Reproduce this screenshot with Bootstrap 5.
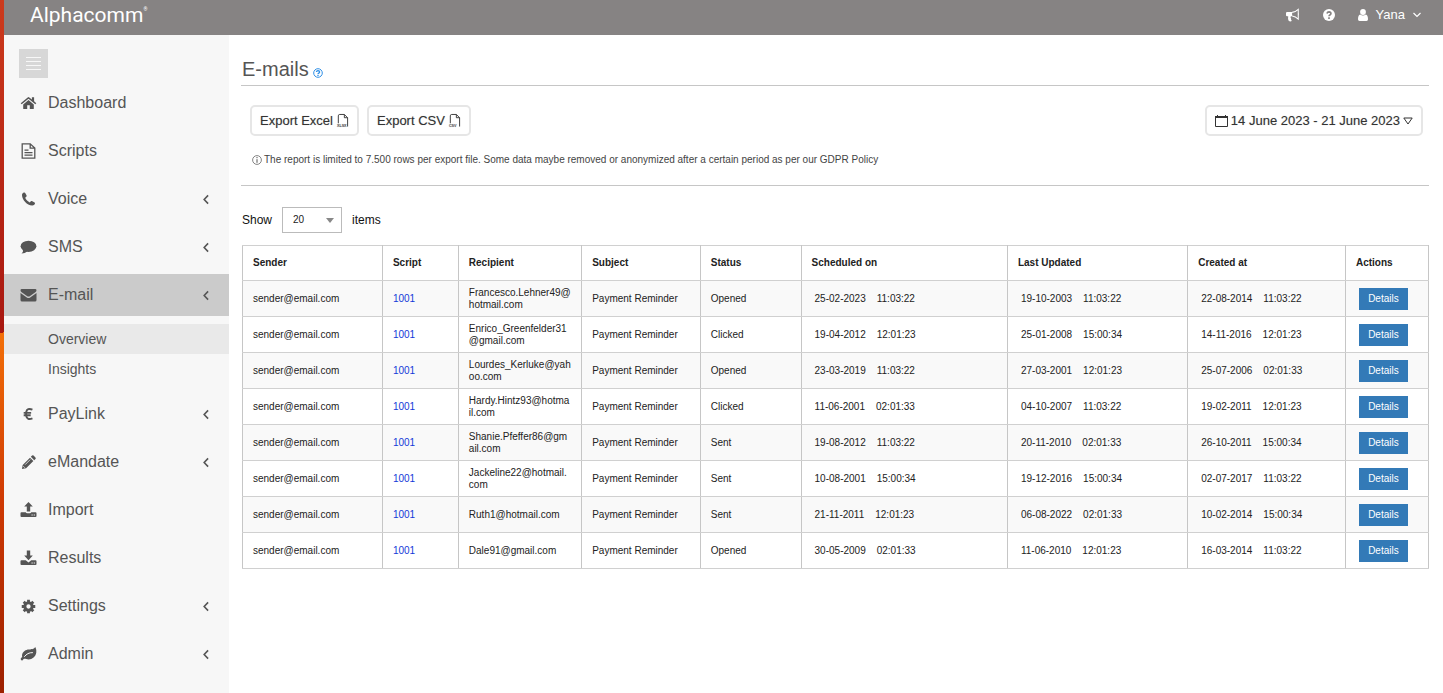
<!DOCTYPE html>
<html lang="en">
<head>
<meta charset="utf-8">
<meta name="viewport" content="width=device-width, initial-scale=1">
<title>Alphacomm - E-mails</title>
<link href="https://cdn.jsdelivr.net/npm/bootstrap@5.3.0/dist/css/bootstrap.min.css" rel="stylesheet">
<style>
  body { font-family: "Liberation Sans", Arial, sans-serif; font-size: 12px; line-height: 16px; color: #222; background: #fff; }
  svg { display: block; flex: none; }
  .shell { min-height: 100vh; }
  .edge { width: 4px; flex: none; background: linear-gradient(170deg, #cc3a1c 0, #a81710 48%, #f37008 48%, #cf3a04 72%, #9c2000 100%); }
  .topbar { height: 35px; background: #868383; color: #fff; padding: 0 22px 6px 26px; }
  .brand { font-family: Roboto, sans-serif; font-weight: 400; font-size: 21px; line-height: 28px; color: #fff; text-decoration: none; }
  .brand sup { font-size: 5px; top: -11px; }
  .topbar button { color: #fff; background: none; border: 0; padding: 0; font-size: 13px; }
  .topicons { gap: 23px; padding-top: 1px; }
  .sidebar { width: 225px; flex: none; background: #f7f7f7; padding-top: 14px; }
  .burger { width: 29px; height: 29px; margin: 0 0 4px 15px; padding: 7px; border: 0; background: #d7d7d7; }
  .side-item { height: 42px; margin-bottom: 6px; padding: 0 18px 0 16px; color: #555; font-size: 16px; text-decoration: none; gap: 11px; }
  .side-item.current { background: #cbcbcb; margin-bottom: 8px; }
  .side-sub { height: 30px; padding-left: 44px; font-size: 14px; color: #555; text-decoration: none; }
  .side-sub.current { background: #e9e9e9; }
  .subs { margin-bottom: 9px; }
  .content { padding: 21px 14px 20px 12px; min-width: 0; }
  .page-title { font-size: 20px; line-height: 26px; color: #555; margin: 0; padding-left: 1px; font-weight: 400; }
  .title-row { padding-bottom: 3px; border-bottom: 1px solid #c6c6c6; gap: 4px; }
  .tools { padding: 19px 6px 0 9px; }
  .tool-btn { height: 31px; background: #fff; border: 2px solid #e6e6e6; border-radius: 5px; color: #333; font-size: 13px; padding: 0 8px; gap: 3px; text-shadow: 0 0 1px #bbb; }
  .note { font-size: 10px; color: #444; padding: 16px 0 17px 11px; gap: 2px; border-bottom: 1px solid #c6c6c6; }
  .show-row { padding: 21px 0 12px 1px; gap: 10px; color: #111; }
  .count-pick { width: 60px; height: 26px; font-size: 10px; border: 1px solid #bbb; border-radius: 0; padding: 0 20px 0 10px; color: #222; appearance: none; background: #fff; }
  .pick-wrap::after { content: ""; position: absolute; right: 8px; top: 11px; border: 4px solid transparent; border-top: 5px solid #888; border-bottom: 0; pointer-events: none; }
  .mails { width: calc(100% - 1px); margin: 0 0 0 1px; table-layout: fixed; font-size: 10px; line-height: 12px; border-collapse: collapse; color: #222; }
  .mails th, .mails td { padding: 0 10px; border: 1px solid #c6c6c6; border-top-color: #d0d0d0; border-bottom-color: #d0d0d0; vertical-align: middle; }
  .mails th { height: 35px; }
  .mails td { height: 36px; }
  .mails tbody tr:nth-child(odd) { background: #f9f9f9; }
  .mails td.addr { word-break: break-all; }
  .mails td.stamp { padding-left: 13px; }
  .stamp span + span { margin-left: 11px; }
  .mails a { color: #1439d8; text-decoration: none; }
  .detail-btn { display: block; width: 49px; height: 22px; margin-left: 3px; padding: 0; border: 0; border-radius: 0; background: #337ab7; color: #fff; font-size: 10px; }
</style>
</head>
<body>
<svg class="d-none" xmlns="http://www.w3.org/2000/svg">
  <symbol id="i-home" viewBox="0 0 16 16"><path d="M8 5 2.700 9.400V13.400q0 .6.600.6H6.700V10.200H9.300V14h3.400q.6 0 .6-.6V9.400z"/><path d="M.2 8.200 1.200 9.300 8 3.800l6.800 5.500 1-1.100-2.200-1.900V2.300h-2.200v2.300L8.800 2.400q-.8-.6-1.600 0z"/></symbol>
  <symbol id="i-doc" viewBox="0 0 16 16"><path fill="none" stroke="currentColor" stroke-width="1.300" d="M1.700.8h8L14.300 5v10.200H1.700zM9.700.8V5.200h4.600"/><path d="M4 6.500h4v1.200H4zM4 9h8v1.200H4zm0 2.500h8v1.200H4z"/></symbol>
  <symbol id="i-phone" viewBox="0 0 16 16"><path d="M1.500 4.200C1.400 2.900 2.300 1.800 3.600 1.500q.8-.2 1.100.4l1.400 2.700q.3.6-.3 1.100L4.700 6.700c.8 1.900 2.600 3.800 4.600 4.700l1-1.200q.5-.5 1.100-.2l2.700 1.500q.6.4.4 1.100c-.3 1.300-1.600 2-2.900 1.900C6.500 14.300 1.700 9 1.500 4.200z"/></symbol>
  <symbol id="i-chat" viewBox="0 0 16 16"><ellipse cx="8" cy="7.300" rx="7.900" ry="5.600"/><path d="M2.500 10.500Q3 13 1 14.600q3.500 0 6-2.300z"/></symbol>
  <symbol id="i-mail" viewBox="0 0 16 16"><path d="M1.400 2h13.200Q16 2 16 3.300 16 4.600 14.500 5.600L9.200 9.200Q8 10 6.800 9.200L1.500 5.600Q0 4.600 0 3.300 0 2 1.400 2zM0 6l6.300 4.400q1.700 1.100 3.400 0L16 6v7q0 1.500-1.500 1.500h-13Q0 14.500 0 13z"/></symbol>
  <symbol id="i-pencil" viewBox="0 0 16 16"><path d="M9.600 2.800 13.200 6.400 5.400 14.200 1 15l.8-4.400zM10.500 1.900l1.300-1.300q.8-.7 1.600 0L15.400 2.600q.7.800 0 1.600l-1.300 1.300z"/><path stroke="#f7f7f7" stroke-width=".8" d="M4.400 10.300l5.500-5.500M2.400 11.900l1.700 1.700"/></symbol>
  <symbol id="i-up" viewBox="0 0 16 16"><path d="M8 0l4.300 4.600H9.700V9.500H6.300V4.600H3.700zM.9 10.300h4.300q.5 1 1.500 1h2.600q1 0 1.500-1h4.300q.9 0 .9.900v2.900q0 .9-.9.900H.9Q0 15 0 14.100v-2.900q0-.9.900-.9z"/><path fill="#f7f7f7" d="M11 12.500h1.200v1H11zm2.200 0h1.200v1h-1.200z"/></symbol>
  <symbol id="i-down" viewBox="0 0 16 16"><path d="M8 10.200 3.700 5.600h2.600V.5h3.400v5.100h2.600zM.9 10.300h4.300L8 12.500l2.800-2.200h4.300q.9 0 .9.900v2.900q0 .9-.9.900H.9Q0 15 0 14.100v-2.900q0-.9.900-.9z"/><path fill="#f7f7f7" d="M11 12.500h1.200v1H11zm2.200 0h1.200v1h-1.200z"/></symbol>
  <symbol id="i-gear" viewBox="0 0 16 16"><circle cx="8" cy="8" r="3.900" fill="none" stroke="currentColor" stroke-width="3.200"/><path stroke="currentColor" stroke-width="3" d="M8 .8v3M8 12.200v3M.8 8h3M12.200 8h3M2.900 2.900 5 5M11 11l2.100 2.100M2.900 13.100 5 11M11 5l2.100-2.100"/></symbol>
  <symbol id="i-leaf" viewBox="0 0 16 16"><path d="M15 1.200q1.100 2.500.8 5.300c-.7 4.400-4 6.800-7.700 6.900-1.800 0-2.900-.7-4.200-.7-1 0-1.500 1.700-2.300 1.700Q.7 14.400.2 13.200c-.3-.8.600-1.500 1.500-2.300C1 7.500 3.100 4.600 6.100 3.900c3-.8 6.400 0 8-2.100q.5-.9.900-.6z"/><path fill="none" stroke="#f7f7f7" stroke-width="1" stroke-linecap="round" d="M4 10.500c2-2.500 4.500-4 8-3.900"/></symbol>
  <symbol id="i-chev" viewBox="0 0 10 12"><path fill="none" stroke="currentColor" stroke-width="1.700" d="M7.300 1.500 3 6l4.300 4.500"/></symbol>
  <symbol id="i-file" viewBox="0 0 14 16"><path fill="none" stroke="currentColor" stroke-width="1" d="M2.500 11V3Q2.500 1.500 4 1.500H9l3.500 3.500V14.500M9 1.500v3.500h3.500"/></symbol>
</svg>

<div class="shell d-flex">
  <div class="edge"></div>
  <div class="d-flex flex-column flex-grow-1" style="min-width:0">
    <header class="topbar d-flex align-items-center justify-content-between">
      <a class="brand" href="#">Alphacomm<sup>®</sup></a>
      <div class="topicons d-flex align-items-center">
        <button type="button" aria-label="Announcements"><svg width="14" height="14" viewBox="0 0 16 16" fill="#fff"><path d="M1.300 4.500H7v5H5.500q-.8 1.500.4 2.700-.7 1.500.9 2.500-1.500 1.200-3.600.2-1.300-2.800-.7-5.400H1.300Q0 9.500 0 8.300V5.700q0-1.200 1.300-1.200z"/><path fill="none" stroke="#fff" stroke-width="1.200" d="M7 5Q11 4.600 14 1.600v11Q11 9.600 7 9.100"/><path d="M14 5.500q1.800 1.500 0 3z"/></svg></button>
        <button type="button" aria-label="Help"><svg width="12" height="12" viewBox="0 0 16 16"><circle cx="8" cy="8" r="8" fill="#fff"/><path fill="none" stroke="#868383" stroke-width="2.200" d="M5.300 6Q5.800 3.900 8 3.900q2.600.1 2.600 2.200 0 1.200-1.400 1.900Q8 8.700 8 9.800M8 11v2.200"/></svg></button>
        <button type="button" class="d-flex align-items-center"><svg class="me-2" width="10" height="12" viewBox="0 0 10 12" fill="#fff"><circle cx="5" cy="3" r="2.900"/><path d="M2.200 5.500Q5 7.600 7.800 5.500 10 6.300 10 10.300 10 12 8.500 12h-7Q0 12 0 10.300 0 6.300 2.200 5.500z"/></svg>Yana<svg class="ms-2" width="8" height="6" viewBox="0 0 8 6"><path fill="none" stroke="#fff" stroke-width="1.200" d="M.5 1 4 4.500 7.500 1"/></svg></button>
      </div>
    </header>

    <div class="d-flex flex-grow-1">
      <nav class="sidebar d-flex flex-column" aria-label="Main">
        <button type="button" class="burger" aria-label="Toggle menu"><svg width="15" height="15" viewBox="0 0 15 15"><path stroke="#f7f7f7" d="M0 1.500h15M0 5.500h15M0 9.500h15M0 13.500h15"/></svg></button>
        <a class="side-item d-flex align-items-center" href="#"><svg width="17" height="16" fill="currentColor"><use href="#i-home"/></svg>Dashboard</a>
        <a class="side-item d-flex align-items-center" href="#"><svg width="17" height="16" fill="currentColor"><use href="#i-doc"/></svg>Scripts</a>
        <a class="side-item d-flex align-items-center" href="#"><svg width="17" height="16" fill="currentColor"><use href="#i-phone"/></svg>Voice<svg class="ms-auto" width="10" height="11"><use href="#i-chev"/></svg></a>
        <a class="side-item d-flex align-items-center" href="#"><svg width="17" height="16" fill="currentColor"><use href="#i-chat"/></svg>SMS<svg class="ms-auto" width="10" height="11"><use href="#i-chev"/></svg></a>
        <a class="side-item current d-flex align-items-center" href="#"><svg width="17" height="16" fill="currentColor"><use href="#i-mail"/></svg>E-mail<svg class="ms-auto" width="10" height="11"><use href="#i-chev"/></svg></a>
        <div class="subs">
          <a class="side-sub current d-flex align-items-center" href="#">Overview</a>
          <a class="side-sub d-flex align-items-center" href="#">Insights</a>
        </div>
        <a class="side-item d-flex align-items-center" href="#"><svg width="17" height="14" viewBox="0 0 17 16"><path fill="none" stroke="currentColor" stroke-width="2.200" d="M13 3Q7 .5 5.800 6v4Q7 15.500 13 13M3 6.700h8.500M3 9.500h8"/></svg>PayLink<svg class="ms-auto" width="10" height="11"><use href="#i-chev"/></svg></a>
        <a class="side-item d-flex align-items-center" href="#"><svg width="17" height="15" fill="currentColor"><use href="#i-pencil"/></svg>eMandate<svg class="ms-auto" width="10" height="11"><use href="#i-chev"/></svg></a>
        <a class="side-item d-flex align-items-center" href="#"><svg width="17" height="16" fill="currentColor"><use href="#i-up"/></svg>Import</a>
        <a class="side-item d-flex align-items-center" href="#"><svg width="17" height="16" fill="currentColor"><use href="#i-down"/></svg>Results</a>
        <a class="side-item d-flex align-items-center" href="#"><svg width="17" height="15" fill="currentColor"><use href="#i-gear"/></svg>Settings<svg class="ms-auto" width="10" height="11"><use href="#i-chev"/></svg></a>
        <a class="side-item d-flex align-items-center" href="#"><svg width="17" height="16" fill="currentColor"><use href="#i-leaf"/></svg>Admin<svg class="ms-auto" width="10" height="11"><use href="#i-chev"/></svg></a>
      </nav>

      <main class="content flex-grow-1">
        <div class="title-row d-flex align-items-end">
          <h1 class="page-title">E-mails</h1>
          <svg class="mb-1" width="10" height="10" viewBox="0 0 10 10"><circle cx="5" cy="5" r="4.300" fill="none" stroke="#2f8fe6"/><path fill="none" stroke="#2f8fe6" stroke-width="1.300" d="M3.400 4Q3.600 2.700 5 2.700q1.600.1 1.600 1.300 0 .7-.8 1.100Q5 5.500 5 6.100M5 6.800v1.100"/></svg>
        </div>
        <div class="tools d-flex justify-content-between">
          <div class="d-flex gap-2">
            <button type="button" class="tool-btn d-flex align-items-center">Export Excel<svg width="13" height="15" viewBox="0 0 14 16"><use href="#i-file"/><text x="1" y="15" font-size="4" font-weight="700" fill="#555">XLSX</text></svg></button>
            <button type="button" class="tool-btn d-flex align-items-center">Export CSV<svg width="13" height="15" viewBox="0 0 14 16"><use href="#i-file"/><text x="1" y="15" font-size="4" font-weight="700" fill="#555">CSV</text></svg></button>
          </div>
          <button type="button" class="tool-btn d-flex align-items-center"><svg width="13" height="14" viewBox="0 0 13 14"><path fill="none" stroke="currentColor" d="M.5 2.500h12v10H.5z"/><path fill="currentColor" d="M0 2h13V4H0zM2 1h1v1H2zm8 0h1v1h-1z"/></svg>14 June 2023 - 21 June 2023<svg width="10" height="8" viewBox="0 0 10 8"><path fill="none" stroke="currentColor" d="M.8 1h8.400L5 7z"/></svg></button>
        </div>
        <div class="note d-flex align-items-center"><svg width="10" height="10" viewBox="0 0 10 10"><circle cx="5" cy="5" r="4.400" fill="none" stroke="#666" stroke-width=".8"/><path stroke="#555" d="M5 2v1.200M5 4.200v3.600"/></svg><span>The report is limited to 7.500 rows per export file. Some data maybe removed or anonymized after a certain period as per our GDPR Policy</span></div>
        <div class="show-row d-flex align-items-center">
          <label for="count">Show</label>
          <span class="pick-wrap position-relative d-flex"><select id="count" class="count-pick"><option>20</option><option>50</option></select></span>
          <span>items</span>
        </div>
        <table class="mails">
          <colgroup><col style="width:11.8%"><col style="width:6.4%"><col style="width:10.4%"><col style="width:10%"><col style="width:8.500%"><col style="width:17.4%"><col style="width:15.200%"><col style="width:13.300%"><col style="width:7%"></colgroup>
          <thead><tr><th>Sender</th><th>Script</th><th>Recipient</th><th>Subject</th><th>Status</th><th>Scheduled on</th><th>Last Updated</th><th>Created at</th><th>Actions</th></tr></thead>
          <tbody>
            <tr><td>sender@email.com</td><td><a href="#">1001</a></td><td class="addr">Francesco.Lehner49@hotmail.com</td><td>Payment Reminder</td><td>Opened</td><td class="stamp"><span>25-02-2023</span><span>11:03:22</span></td><td class="stamp"><span>19-10-2003</span><span>11:03:22</span></td><td class="stamp"><span>22-08-2014</span><span>11:03:22</span></td><td><button type="button" class="detail-btn">Details</button></td></tr>
            <tr><td>sender@email.com</td><td><a href="#">1001</a></td><td class="addr">Enrico_Greenfelder31@gmail.com</td><td>Payment Reminder</td><td>Clicked</td><td class="stamp"><span>19-04-2012</span><span>12:01:23</span></td><td class="stamp"><span>25-01-2008</span><span>15:00:34</span></td><td class="stamp"><span>14-11-2016</span><span>12:01:23</span></td><td><button type="button" class="detail-btn">Details</button></td></tr>
            <tr><td>sender@email.com</td><td><a href="#">1001</a></td><td class="addr">Lourdes_Kerluke@yahoo.com</td><td>Payment Reminder</td><td>Opened</td><td class="stamp"><span>23-03-2019</span><span>11:03:22</span></td><td class="stamp"><span>27-03-2001</span><span>12:01:23</span></td><td class="stamp"><span>25-07-2006</span><span>02:01:33</span></td><td><button type="button" class="detail-btn">Details</button></td></tr>
            <tr><td>sender@email.com</td><td><a href="#">1001</a></td><td class="addr">Hardy.Hintz93@hotmail.com</td><td>Payment Reminder</td><td>Clicked</td><td class="stamp"><span>11-06-2001</span><span>02:01:33</span></td><td class="stamp"><span>04-10-2007</span><span>11:03:22</span></td><td class="stamp"><span>19-02-2011</span><span>12:01:23</span></td><td><button type="button" class="detail-btn">Details</button></td></tr>
            <tr><td>sender@email.com</td><td><a href="#">1001</a></td><td class="addr">Shanie.Pfeffer86@gmail.com</td><td>Payment Reminder</td><td>Sent</td><td class="stamp"><span>19-08-2012</span><span>11:03:22</span></td><td class="stamp"><span>20-11-2010</span><span>02:01:33</span></td><td class="stamp"><span>26-10-2011</span><span>15:00:34</span></td><td><button type="button" class="detail-btn">Details</button></td></tr>
            <tr><td>sender@email.com</td><td><a href="#">1001</a></td><td class="addr">Jackeline22@hotmail.com</td><td>Payment Reminder</td><td>Sent</td><td class="stamp"><span>10-08-2001</span><span>15:00:34</span></td><td class="stamp"><span>19-12-2016</span><span>15:00:34</span></td><td class="stamp"><span>02-07-2017</span><span>11:03:22</span></td><td><button type="button" class="detail-btn">Details</button></td></tr>
            <tr><td>sender@email.com</td><td><a href="#">1001</a></td><td class="addr">Ruth1@hotmail.com</td><td>Payment Reminder</td><td>Sent</td><td class="stamp"><span>21-11-2011</span><span>12:01:23</span></td><td class="stamp"><span>06-08-2022</span><span>02:01:33</span></td><td class="stamp"><span>10-02-2014</span><span>15:00:34</span></td><td><button type="button" class="detail-btn">Details</button></td></tr>
            <tr><td>sender@email.com</td><td><a href="#">1001</a></td><td class="addr">Dale91@gmail.com</td><td>Payment Reminder</td><td>Opened</td><td class="stamp"><span>30-05-2009</span><span>02:01:33</span></td><td class="stamp"><span>11-06-2010</span><span>12:01:23</span></td><td class="stamp"><span>16-03-2014</span><span>11:03:22</span></td><td><button type="button" class="detail-btn">Details</button></td></tr>
          </tbody>
        </table>
      </main>
    </div>
  </div>
</div>
<script src="https://cdn.jsdelivr.net/npm/bootstrap@5.3.0/dist/js/bootstrap.bundle.min.js"></script>
</body>
</html>
